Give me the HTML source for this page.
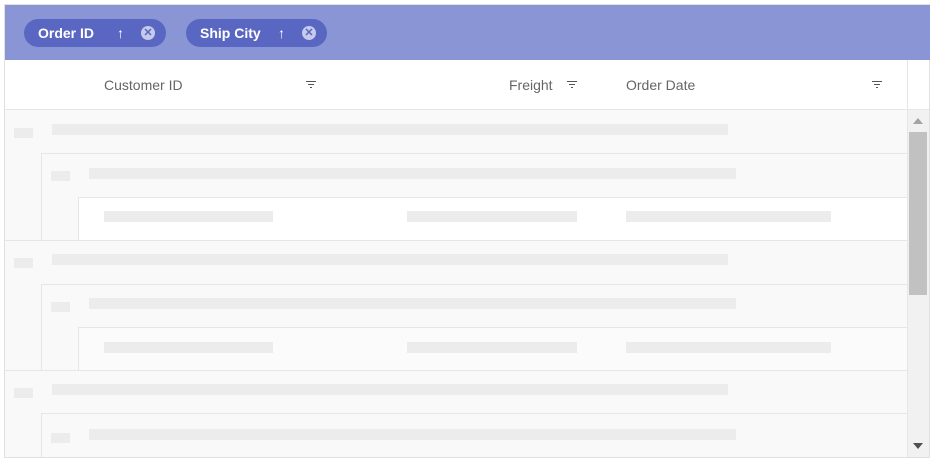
<!DOCTYPE html>
<html><head><style>
*{margin:0;padding:0;box-sizing:border-box}
body{width:936px;height:461px;background:#fff;position:relative;overflow:hidden;font-family:"Liberation Sans",Roboto,sans-serif}
.a{position:absolute}
.bar{position:absolute;background:#ececec;height:11px}
.ic{position:absolute;background:#ececec;width:19px;height:10px}
.ln{position:absolute;background:#e6e6e6;height:1px}
.vl{position:absolute;background:#e6e6e6;width:1px}
.chip{position:absolute;top:19px;height:28px;border-radius:14px;background:#5a67c2;color:#fff;font-size:14px;font-weight:bold;line-height:28px;padding-left:14px}
.x{position:absolute;top:7px;width:14px;height:14px;border-radius:7px;background:#c6cbec;color:#5a67c2;font-size:11px;line-height:14px;text-align:center;font-weight:bold}
.arr{position:absolute;top:0;font-size:14px;font-weight:normal}
.h{position:absolute;top:77px;font-size:14px;color:#666}
.f{position:absolute;width:10px}
.f i{display:block;height:1px;background:#555;margin:0 auto 2px}
</style></head><body>
<div class="a" style="left:4px;top:4px;width:926px;height:454px;border:1px solid #e0e0e0"></div>
<div class="a" style="left:5px;top:5px;width:925px;height:55px;background:#8a95d6"></div>
<div class="chip" style="left:24px;width:142px">Order ID<span class="arr" style="left:93px">↑</span><span class="x" style="left:117px">✕</span></div>
<div class="chip" style="left:186px;width:141px">Ship City<span class="arr" style="left:92px">↑</span><span class="x" style="left:116px">✕</span></div>
<div class="h" style="left:104px">Customer ID</div>
<div class="h" style="left:509px">Freight</div>
<div class="h" style="left:626px">Order Date</div>
<div class="f" style="left:306px;top:81px"><i style="width:10px"></i><i style="width:6px"></i><i style="width:2px"></i></div>
<div class="f" style="left:567px;top:81px"><i style="width:10px"></i><i style="width:6px"></i><i style="width:2px"></i></div>
<div class="f" style="left:872px;top:81px"><i style="width:10px"></i><i style="width:6px"></i><i style="width:2px"></i></div>
<div class="vl" style="left:907px;top:60px;height:50px"></div>
<div class="ln" style="left:5px;top:109px;width:924px"></div>

<div class="a" style="left:5px;top:110px;width:902px;height:347px;background:#f9f9f9"></div>
<div class="ic" style="left:14px;top:128px"></div><div class="bar" style="left:52px;top:124px;width:676px"></div>
<div class="ln" style="left:41px;top:153px;width:866px"></div><div class="vl" style="left:41px;top:153px;height:87px"></div>
<div class="ic" style="left:51px;top:171px"></div><div class="bar" style="left:89px;top:168px;width:647px"></div>
<div class="a" style="left:78px;top:197px;width:829px;height:43px;background:#fff"></div>
<div class="ln" style="left:78px;top:197px;width:829px"></div><div class="vl" style="left:78px;top:197px;height:43px"></div>
<div class="bar" style="left:104px;top:211px;width:169px"></div><div class="bar" style="left:407px;top:211px;width:170px"></div><div class="bar" style="left:626px;top:211px;width:205px"></div>
<div class="ln" style="left:5px;top:240px;width:902px"></div>
<div class="ic" style="left:14px;top:258px"></div><div class="bar" style="left:52px;top:254px;width:676px"></div>
<div class="ln" style="left:41px;top:284px;width:866px"></div><div class="vl" style="left:41px;top:284px;height:86px"></div>
<div class="ic" style="left:51px;top:302px"></div><div class="bar" style="left:89px;top:298px;width:647px"></div>
<div class="a" style="left:78px;top:327px;width:829px;height:43px;background:#fbfbfb"></div>
<div class="ln" style="left:78px;top:327px;width:829px"></div><div class="vl" style="left:78px;top:327px;height:43px"></div>
<div class="bar" style="left:104px;top:342px;width:169px"></div><div class="bar" style="left:407px;top:342px;width:170px"></div><div class="bar" style="left:626px;top:342px;width:205px"></div>
<div class="ln" style="left:5px;top:370px;width:902px"></div>
<div class="ic" style="left:14px;top:388px"></div><div class="bar" style="left:52px;top:384px;width:676px"></div>
<div class="ln" style="left:41px;top:413px;width:866px"></div><div class="vl" style="left:41px;top:413px;height:44px"></div>
<div class="ic" style="left:51px;top:433px"></div><div class="bar" style="left:89px;top:429px;width:647px"></div>

<div class="a" style="left:907px;top:110px;width:22px;height:347px;background:#f1f1f1;border-left:1px solid #e6e6e6"></div>
<div class="a" style="left:909px;top:132px;width:18px;height:163px;background:#c1c1c1"></div>
<div class="a" style="left:913px;top:118px;width:0;height:0;border-left:5px solid transparent;border-right:5px solid transparent;border-bottom:6px solid #a3a3a3"></div>
<div class="a" style="left:913px;top:443px;width:0;height:0;border-left:5px solid transparent;border-right:5px solid transparent;border-top:6px solid #505050"></div>
</body></html>
